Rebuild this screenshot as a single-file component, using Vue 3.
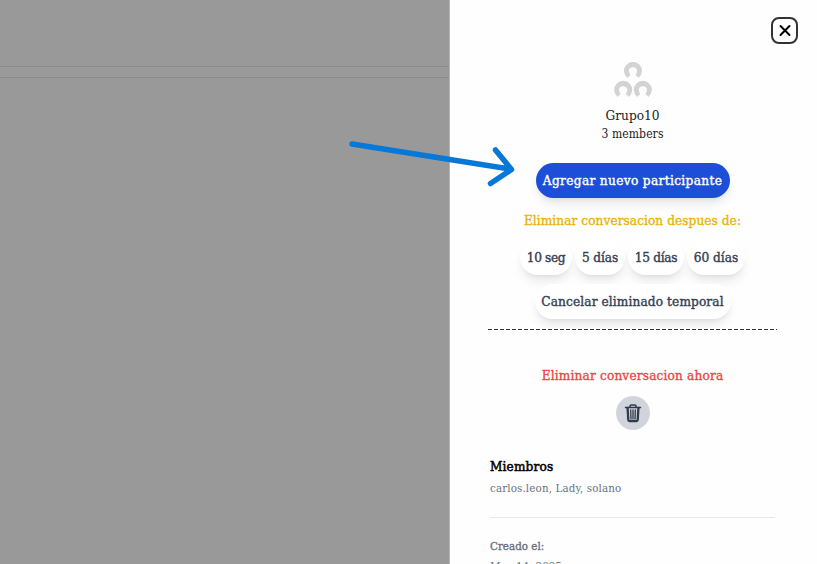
<script setup>
const timers = [
  { label: '10 seg', size: 's10' },
  { label: '5 días', size: 's5' },
  { label: '15 días', size: 's15' },
  { label: '60 días', size: 's60' },
]
</script>

<template>
  <div class="screen">
    <div class="backdrop"><div class="band"></div></div>
    <aside class="drawer">
      <header class="top">
        <button class="close" aria-label="Cerrar">
          <svg width="28" height="28" viewBox="0 0 28 28"><path d="M9.500 9l9 9M18.500 9l-9 9" stroke="#000" stroke-width="2" stroke-linecap="round" /></svg>
        </button>
      </header>
      <section class="group">
        <svg class="avatars" width="40" height="36" viewBox="0 0 40 36">
          <defs>
            <g id="person"><path d="M3.400 15.600A9 9 0 1 1 14.600 15.600Q13.900 14.200 12.200 13.500Q11.500 12.900 12.100 11.800C14.300 8 12.800 4.900 9 4.900S3.700 8 5.900 11.800Q6.500 12.900 5.800 13.500Q4.100 14.200 3.400 15.600Z" fill="#d3d3d3" /></g>
          </defs>
          <use href="#person" x="11" y="0.300" />
          <use href="#person" x="1.200" y="19.300" />
          <use href="#person" x="20.800" y="19.300" />
        </svg>
        <div class="name"><span>Grupo10</span></div>
        <div class="count"><span>3 members</span></div>
      </section>
      <button class="pill add"><span>Agregar nuevo participante</span></button>
      <div class="label after"><span>Eliminar conversacion despues de:</span></div>
      <div class="timers">
        <button v-for="t in timers" :key="t.label" class="pill timer" :class="t.size"><span>{{ t.label }}</span></button>
      </div>
      <button class="pill cancel"><span>Cancelar eliminado temporal</span></button>
      <svg class="dashes" width="289" height="2" viewBox="0 0 289 2"><path d="M0 .5H289" stroke="#333" stroke-width="1" stroke-dasharray="4 2" /></svg>
      <div class="label now"><span>Eliminar conversacion ahora</span></div>
      <button class="trash" aria-label="Eliminar">
        <svg width="20" height="20" viewBox="0 0 20 20" fill="none" stroke="#303b4b" stroke-linecap="round" stroke-linejoin="round"><path d="M2.500 4.500H17.500M7 4V2.900Q7 1.900 8.200 1.900H11.800Q13 1.900 13 2.900V4" stroke-width="1.500" /><path d="M4.600 5L5.300 17Q5.400 18.100 6.500 18.100H13.500Q14.600 18.100 14.700 17L15.400 5" stroke-width="2.300" /><path d="M7.700 7L8 16M10 7V16M12.300 7L12 16" stroke-width="1.300" /></svg>
      </button>
      <section class="info">
        <h3><span>Miembros</span></h3>
        <p class="members"><span>carlos.leon, Lady, solano</span></p>
        <hr />
        <h4><span>Creado el:</span></h4>
        <p class="date"><span>May 14, 2025</span></p>
      </section>
    </aside>
  </div>
  <svg class="arrow" width="180" height="60" viewBox="340 135 180 60"><path d="M352 144L510 169M495.500 150L511.500 169.500L490.500 183.500" /></svg>
</template>

<style>
body { margin: 0; overflow: hidden; }
</style>

<style scoped>
.screen { display: flex; width: 817px; height: 564px; overflow: hidden; font-family: "DejaVu Serif Condensed", "DejaVu Serif", serif; font-stretch: condensed; }
.backdrop { width: 450px; background: #999; padding-top: 66px; border-right: 1px solid #b4b4b4; box-sizing: border-box; flex: none; }
.band { height: 10px; border-top: 1px solid #8b8b8b; border-bottom: 1px solid #8b8b8b; }
.drawer { width: 367px; flex: none; box-sizing: border-box; background: #fefefe; display: flex; flex-direction: column; align-items: center; padding-right: 2px; }
.drawer > * { flex: none; }
button { border: 0; padding: 0; font-family: inherit; background: none; }
span { white-space: nowrap; }
.top { align-self: stretch; height: 62px; display: flex; justify-content: flex-end; padding: 17px 17px 0 0; box-sizing: border-box; }
.close { width: 27px; height: 27px; border: 2px solid #333; border-radius: 8px; display: flex; align-items: center; justify-content: center; box-sizing: border-box; }
.close svg { flex: none; }
.group { display: flex; flex-direction: column; align-items: center; height: 101px; }
.avatars { display: block; }
.name { font-size: 13.500px; line-height: 18px; margin-top: 8px; color: #222; letter-spacing: .05px; }
.count { font-size: 12px; line-height: 20px; color: #222; letter-spacing: .1px; }
.pill { height: 35px; border-radius: 18px; background: #fff; color: #374151; font-size: 13.500px; text-align: center; padding-bottom: 2px; box-sizing: border-box; box-shadow: 0 8px 12px -3px rgba(0,0,0,.1), 0 3px 5px -2px rgba(0,0,0,.06); -webkit-text-stroke: .4px currentColor; }
.add { width: 194px; background: #1d4ed8; color: #fff; letter-spacing: .35px; }
.label { font-size: 13.500px; line-height: 20px; -webkit-text-stroke: .35px currentColor; }
.after { margin-top: 12px; color: #eab308; letter-spacing: .07px; }
.timers { display: flex; gap: 3px; margin: 10px 0 9px; }
.s10 { width: 52px; letter-spacing: -.35px; }
.s5 { width: 50px; letter-spacing: -.1px; }
.s15 { width: 56px; letter-spacing: -.3px; }
.s60 { width: 58px; }
.cancel { width: 196px; letter-spacing: .12px; }
.dashes { margin-top: 10px; }
.now { margin-top: 34px; color: #ef4444; letter-spacing: .17px; }
.trash { width: 34px; height: 34px; border-radius: 50%; background: #d1d5db; margin-top: 11px; display: flex; align-items: center; justify-content: center; }
.info { width: 285px; margin-top: 25px; }
.info > * { margin: 0; font-weight: 400; }
h3 { font-size: 13.500px; line-height: 22px; color: #000; -webkit-text-stroke: .5px currentColor; letter-spacing: .15px; }
.members { font-size: 11.500px; line-height: 20px; color: #6b7280; letter-spacing: .12px; padding-top: 1px; }
hr { border: 0; border-top: 1px solid #e5e7eb; margin: 19px 0 18px !important; }
h4 { font-size: 11.500px; line-height: 20px; color: #6b7280; -webkit-text-stroke: .35px currentColor; }
.date { font-size: 11.500px; line-height: 20px; color: #6b7280; }
.arrow { position: absolute; left: 340px; top: 135px; fill: none; stroke: #0878d8; stroke-width: 5.500; stroke-linecap: round; stroke-linejoin: round; }
</style>
